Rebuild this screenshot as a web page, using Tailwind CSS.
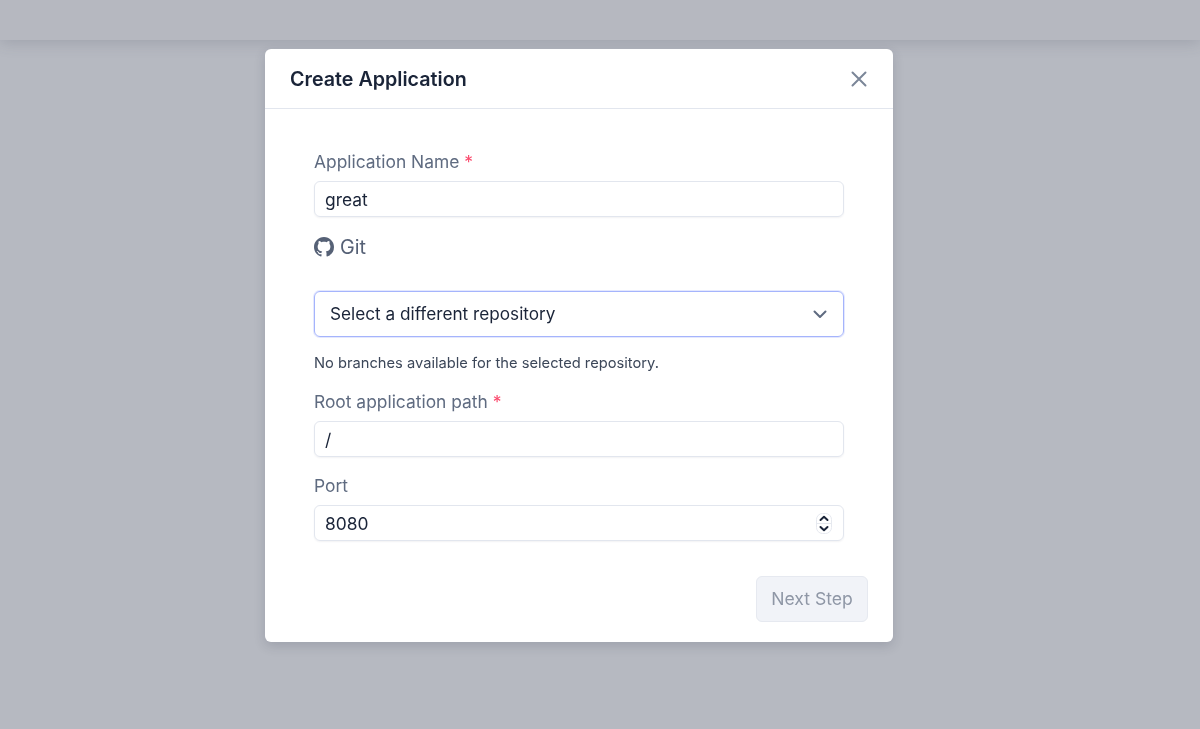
<!DOCTYPE html>
<html lang="en">
<head>
    <meta charset="UTF-8">
    <meta name="viewport" content="width=device-width, initial-scale=1.0">
    <title>Create Application</title>
    <script src="https://cdn.jsdelivr.net/npm/@tailwindcss/browser@4"></script>
</head>
<body class="h-[729px] overflow-hidden bg-[#b6b9c1] font-['Inter',sans-serif]">
    <!-- Page behind the overlay -->
    <div class="h-10 bg-[#b6b8c0] shadow-[0_2px_16px_rgba(70,75,90,0.22)]"></div>

    <!-- Modal -->
    <div class="fixed inset-0 flex justify-center pt-[49px] pr-[42px]">
        <div class="w-[628px] h-[593px] bg-white rounded-md shadow-[0_4px_12px_rgba(30,40,60,0.16)] flex flex-col">
            <div class="h-[60px] shrink-0 flex items-center justify-between pl-[25px] pr-[26px] border-b border-[#e2e6ee]">
                <h2 class="pt-[3px] text-[19.7px] font-semibold text-[#1a2438]">Create Application</h2>
                <svg class="w-4 h-4 text-[#7b8698]" viewBox="0 0 16 16" fill="none" stroke="currentColor" stroke-width="2" stroke-linecap="round"><path d="M1.500 1.500l13 13M14.500 1.500l-13 13"/></svg>
            </div>
            <form class="flex-1 flex flex-col pl-[49px] pr-[49px] pt-[41px]">
                <label class="text-[17.4px] leading-6 text-[#5f6b80]">Application Name <span class="text-[#fb4b6e]">*</span></label>
                <input type="text" value="great" class="mt-[7px] h-9 w-full rounded-md border border-[#e2e6ee] shadow-[0_1px_2px_rgba(30,40,60,0.06)] px-[10px] text-[17.4px] text-[#1a2438] outline-none">

                <div class="mt-[18px] h-6 flex items-center gap-[6px] text-[#566176]">
                    <svg class="w-5 h-5" viewBox="0 0 16 16" fill="currentColor"><path d="M8 0C3.58 0 0 3.58 0 8c0 3.54 2.29 6.53 5.47 7.59.4.07.55-.17.55-.38 0-.19-.01-.82-.01-1.49-2.01.37-2.53-.49-2.69-.94-.09-.23-.48-.94-.82-1.13-.28-.15-.68-.52-.01-.53.63-.01 1.08.58 1.23.82.72 1.21 1.87.87 2.33.66.07-.52.28-.87.51-1.07-1.78-.2-3.64-.89-3.64-3.95 0-.87.31-1.59.82-2.15-.08-.2-.36-1.02.08-2.12 0 0 .67-.21 2.2.82.64-.18 1.32-.27 2-.27s1.36.09 2 .27c1.53-1.04 2.2-.82 2.2-.82.44 1.1.16 1.92.08 2.12.51.56.82 1.27.82 2.15 0 3.07-1.87 3.75-3.65 3.95.29.25.54.73.54 1.48 0 1.07-.01 1.93-.01 2.2 0 .21.15.46.55.38A8.01 8.01 0 0 0 16 8c0-4.42-3.58-8-8-8z"/></svg>
                    <span class="pt-[1px] text-[19.8px]">Git</span>
                </div>

                <div class="mt-[32px] h-[46px] rounded-md border border-[#a5b4fc] shadow-[0_0_0_1px_rgba(165,180,252,0.3)] flex items-center justify-between pl-[15px] pr-[15px]">
                    <span class="text-[17.2px] text-[#1a2438]">Select a different repository</span>
                    <svg class="w-4 h-4 text-[#5f6b80]" viewBox="0 0 16 16" fill="none" stroke="currentColor" stroke-width="2" stroke-linecap="round" stroke-linejoin="round"><path d="M2.500 5.500L8 11l5.500-5.500"/></svg>
                </div>
                <p class="mt-[16px] text-[14.7px] leading-5 text-[#3c4759]">No branches available for the selected repository.</p>

                <label class="mt-[17px] text-[17.4px] leading-6 text-[#5f6b80]">Root application path <span class="text-[#fb4b6e]">*</span></label>
                <input type="text" value="/" class="mt-[7px] h-9 w-full rounded-md border border-[#e2e6ee] shadow-[0_1px_2px_rgba(30,40,60,0.06)] px-[10px] text-[17.4px] text-[#1a2438] outline-none">

                <label class="mt-[17px] text-[17.4px] leading-6 text-[#5f6b80]">Port</label>
                <div class="relative mt-[7px]">
                    <input type="text" value="8080" class="h-9 w-full rounded-md border border-[#e2e6ee] shadow-[0_1px_2px_rgba(30,40,60,0.06)] px-[10px] text-[17.4px] text-[#1a2438] outline-none">
                    <svg class="absolute right-[12px] top-[8px] w-[16px] h-[21px]" viewBox="0 0 16 21" fill="none"><rect x="0.5" y="0.5" width="15" height="20" rx="6" fill="#fff" stroke="#e6e9ef"/><path d="M0.500 10.500h15" stroke="#e6e9ef"/><path d="M4.500 7L8 3.800 11.500 7M4.500 14L8 17.200 11.500 14" stroke="#1a2438" stroke-width="2" stroke-linecap="round" stroke-linejoin="round"/></svg>
                </div>

                <div class="mt-[35px] flex justify-end -mr-6">
                    <button type="button" class="w-[112px] h-[46px] rounded-md border border-[#e6e9f0] bg-[#f1f3f8] text-[17.6px] text-[#8f97a6]">Next Step</button>
                </div>
            </form>
        </div>
    </div>
</body>
</html>
